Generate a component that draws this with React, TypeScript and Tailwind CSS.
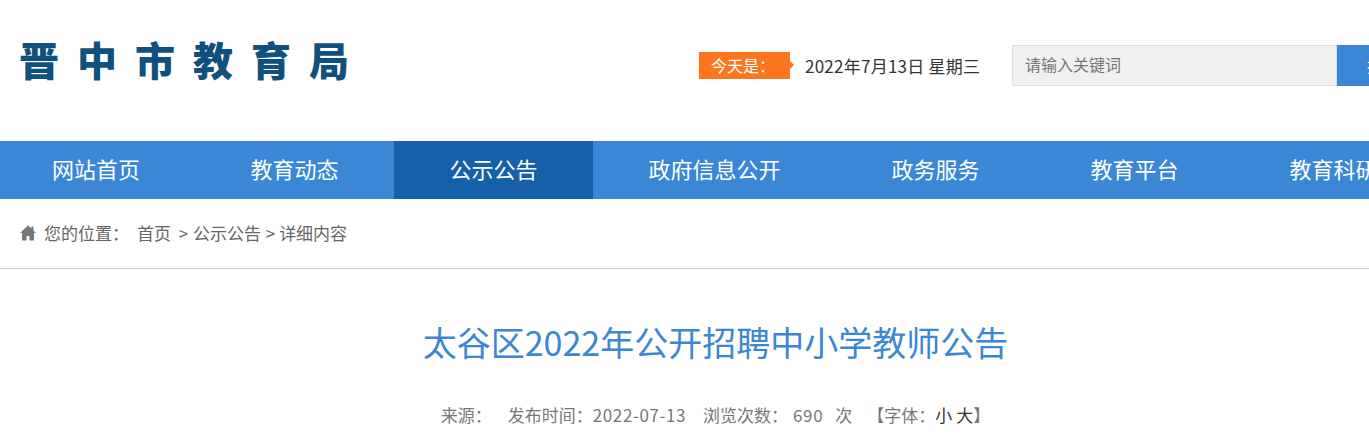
import React from 'react';

const cjk = { fontFamily: '"Noto Sans CJK SC", "Noto Sans", sans-serif' };

const navItems = ['网站首页', '教育动态', '公示公告', '政府信息公开', '政务服务', '教育平台', '教育科研'];

const App: React.FC = () => {
  return (
    <div className="h-[439px] w-[1369px] overflow-hidden bg-white" style={cjk}>
      <div className="w-[1431px]">
        {/* Header */}
        <div className="flex h-[141px] items-start">
          <h1 className="ml-[19px] mt-[34px] w-[680px] whitespace-nowrap text-[40px] leading-[50px] font-black tracking-[18px] text-[#10507f]">
            晋中市教育局
          </h1>
          <div className="mt-[52px] flex items-center">
            <div className="relative h-[27px] w-[91px] bg-[#fb761e] pl-[12px] text-[16px] leading-[27px] text-white">
              今天是：
              <span className="absolute left-full top-[9px] border-y-[4px] border-l-[4px] border-y-transparent border-l-[#fb761e]" />
            </div>
            <span className="ml-[15px] w-[207px] whitespace-nowrap text-[17px] leading-[27px] tracking-[0.25px] text-[#333]">
              2022年7月13日 星期三
            </span>
          </div>
          <div className="mt-[45px] flex h-[41px]">
            <div className="h-full w-[325px] border border-[#e0e0e0] bg-[#f0f0f0] pl-[12px] text-[16px] leading-[36px] text-[#777]">
              请输入关键词
            </div>
            <div className="h-full w-[80px] bg-[#3b86d5] pl-[30px] text-[16px] leading-[41px] text-white">搜索</div>
          </div>
        </div>

        {/* Nav */}
        <nav className="flex h-[58px] bg-[#3b86d5]">
          {navItems.map((item) => (
            <a
              key={item}
              className={`whitespace-nowrap px-[55.5px] text-[22px] leading-[55px] text-white first:pl-[52px] first:pr-[55px] ${
                item === '公示公告' ? 'bg-[#1660aa]' : ''
              }`}
            >
              {item}
            </a>
          ))}
        </nav>

        {/* Breadcrumb */}
        <div className="flex h-[70px] w-[1369px] items-center border-b border-[#ccc] pb-[2px] pl-[20px] text-[17px] text-[#666]">
          <svg viewBox="0 0 16 16" className="mr-[8px] h-[16px] w-[16px] fill-[#777]">
            <path d="M8 .5 0 8h2v7.5h4.6V11h2.8v4.5H14V8h2l-2.6-2.5V1.6h-2v2L8 .5z" />
          </svg>
          <span>您的位置：</span>
          <span className="ml-[8px]">首页</span>
          <span className="ml-[4px] whitespace-pre"> &gt; </span>
          <span className="ml-[1px]">公示公告</span>
          <span className="ml-[1px] whitespace-pre"> &gt; </span>
          <span>详细内容</span>
        </div>

        {/* Article head */}
        <h2 className="mt-[48px] text-center text-[34px] leading-[50px] font-normal text-[#3b86d5]">
          太谷区2022年公开招聘中小学教师公告
        </h2>
        <div className="mt-[35px] flex justify-center whitespace-pre text-[17px] text-[#777]">
          <span>来源：</span>
          <span className="ml-[16px]">
            发布时间：<span className="tracking-[0.6px]">2022-07-13</span>
          </span>
          <span className="ml-[17px]">浏览次数：</span>
          <span className="ml-[5px] tracking-[0.6px]">690</span>
          <span className="ml-[12px]">次</span>
          <span className="ml-[15px]">【字体：</span>
          <span className="text-[#333]">小</span>
          <span className="ml-[4px] text-[#333]">大</span>
          <span>】</span>
        </div>
      </div>
    </div>
  );
};

export default App;
